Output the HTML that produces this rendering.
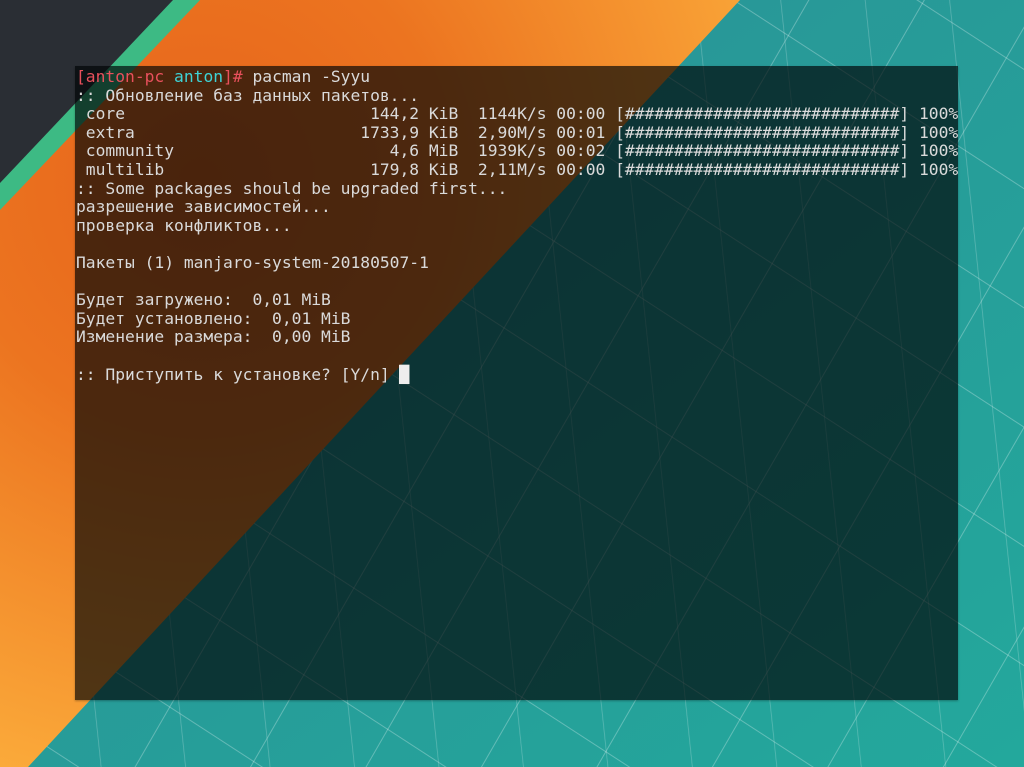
<!DOCTYPE html>
<html><head><meta charset="utf-8"><style>
html,body{margin:0;padding:0;width:1024px;height:767px;overflow:hidden;background:#28999a}
#bg{position:absolute;left:0;top:0}
#term{position:absolute;left:75px;top:66px;width:883px;height:634px;background:rgba(0,4,6,0.68);box-shadow:0 1px 2px rgba(0,0,0,.3)}
pre{position:absolute;left:76px;top:68px;margin:0;font-family:"DejaVu Sans Mono","Liberation Mono",monospace;font-size:16.3px;line-height:18.6px;color:#dadada;white-space:pre}
.r{color:#e8505c}.c{color:#3ed3d6}
.cur{background:#eee;color:#eee}
</style></head><body>
<svg id="bg" width="1024" height="767" viewBox="0 0 1024 767">
<defs>
<linearGradient id="tg" x1="0" y1="0" x2="1" y2="1"><stop offset="0" stop-color="#2b8f95"/><stop offset="1" stop-color="#23a89c"/></linearGradient>
<radialGradient id="og" cx="200" cy="180" r="620" gradientUnits="userSpaceOnUse"><stop offset="0" stop-color="#e6641b"/><stop offset="0.4" stop-color="#ec7420"/><stop offset="1" stop-color="#fbaa3a"/></radialGradient>
<pattern id="p1" width="100" height="100" patternUnits="userSpaceOnUse" patternTransform="rotate(33)"><line x1="0" y1="0" x2="100" y2="0" stroke="rgba(255,255,255,0.28)" stroke-width="2"/></pattern>
<pattern id="p2" width="100" height="100" patternUnits="userSpaceOnUse" patternTransform="rotate(-60) translate(30,0)"><line x1="0" y1="0" x2="100" y2="0" stroke="rgba(255,255,255,0.28)" stroke-width="2"/></pattern>
<pattern id="p3" width="84" height="84" patternUnits="userSpaceOnUse" patternTransform="rotate(-6) translate(20,0)"><line x1="0" y1="0" x2="0" y2="84" stroke="rgba(255,255,255,0.25)" stroke-width="1.5"/></pattern>
</defs>
<rect width="1024" height="767" fill="url(#tg)"/>
<rect width="1024" height="767" fill="url(#p1)"/>
<rect width="1024" height="767" fill="url(#p2)"/>
<rect width="1024" height="767" fill="url(#p3)"/>
<polygon points="0,0 740,0 28,767 0,767" fill="url(#og)"/>
<polygon points="0,0 200,0 0,210" fill="#3dba84"/>
<polygon points="0,0 173,0 0,183" fill="#2a2e34"/>
</svg>
<div id="term"></div>
<pre><span class="r">[anton-pc </span><span class="c">anton</span><span class="r">]#</span> pacman -Syyu
:: Обновление баз данных пакетов...
 core                         144,2 KiB  1144K/s 00:00 [############################] 100%
 extra                       1733,9 KiB  2,90M/s 00:01 [############################] 100%
 community                      4,6 MiB  1939K/s 00:02 [############################] 100%
 multilib                     179,8 KiB  2,11M/s 00:00 [############################] 100%
:: Some packages should be upgraded first...
разрешение зависимостей...
проверка конфликтов...

Пакеты (1) manjaro-system-20180507-1

Будет загружено:  0,01 MiB
Будет установлено:  0,01 MiB
Изменение размера:  0,00 MiB

:: Приступить к установке? [Y/n] <span class="cur">█</span></pre>
</body></html>
